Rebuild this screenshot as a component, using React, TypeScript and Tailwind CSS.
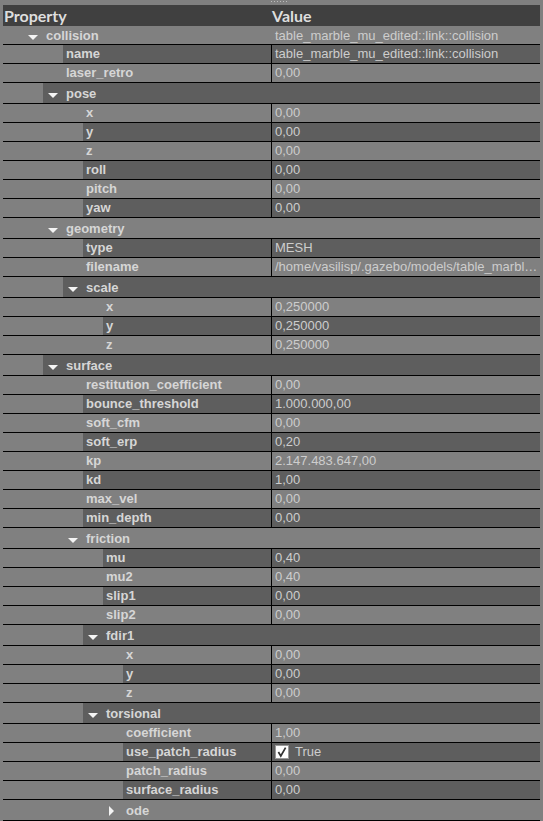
import React from 'react';

type Row = {
  label: string;
  depth: number;
  group?: 'open' | 'closed';
  value?: string;
  check?: boolean;
};

const rows: Row[] = [
  { label: 'collision', depth: 0, group: 'open', value: 'table_marble_mu_edited::link::collision' },
  { label: 'name', depth: 1, value: 'table_marble_mu_edited::link::collision' },
  { label: 'laser_retro', depth: 1, value: '0,00' },
  { label: 'pose', depth: 1, group: 'open' },
  { label: 'x', depth: 2, value: '0,00' },
  { label: 'y', depth: 2, value: '0,00' },
  { label: 'z', depth: 2, value: '0,00' },
  { label: 'roll', depth: 2, value: '0,00' },
  { label: 'pitch', depth: 2, value: '0,00' },
  { label: 'yaw', depth: 2, value: '0,00' },
  { label: 'geometry', depth: 1, group: 'open' },
  { label: 'type', depth: 2, value: 'MESH' },
  { label: 'filename', depth: 2, value: '/home/vasilisp/.gazebo/models/table_marbl…' },
  { label: 'scale', depth: 2, group: 'open' },
  { label: 'x', depth: 3, value: '0,250000' },
  { label: 'y', depth: 3, value: '0,250000' },
  { label: 'z', depth: 3, value: '0,250000' },
  { label: 'surface', depth: 1, group: 'open' },
  { label: 'restitution_coefficient', depth: 2, value: '0,00' },
  { label: 'bounce_threshold', depth: 2, value: '1.000.000,00' },
  { label: 'soft_cfm', depth: 2, value: '0,00' },
  { label: 'soft_erp', depth: 2, value: '0,20' },
  { label: 'kp', depth: 2, value: '2.147.483.647,00' },
  { label: 'kd', depth: 2, value: '1,00' },
  { label: 'max_vel', depth: 2, value: '0,00' },
  { label: 'min_depth', depth: 2, value: '0,00' },
  { label: 'friction', depth: 2, group: 'open' },
  { label: 'mu', depth: 3, value: '0,40' },
  { label: 'mu2', depth: 3, value: '0,40' },
  { label: 'slip1', depth: 3, value: '0,00' },
  { label: 'slip2', depth: 3, value: '0,00' },
  { label: 'fdir1', depth: 3, group: 'open' },
  { label: 'x', depth: 4, value: '0,00' },
  { label: 'y', depth: 4, value: '0,00' },
  { label: 'z', depth: 4, value: '0,00' },
  { label: 'torsional', depth: 3, group: 'open' },
  { label: 'coefficient', depth: 4, value: '1,00' },
  { label: 'use_patch_radius', depth: 4, check: true, value: 'True' },
  { label: 'patch_radius', depth: 4, value: '0,00' },
  { label: 'surface_radius', depth: 4, value: '0,00' },
  { label: 'ode', depth: 4, group: 'closed' },
];

const leafIndent: Record<number, string> = {
  1: 'w-[60px]',
  2: 'w-[80px]',
  3: 'w-[100px]',
  4: 'w-[120px]',
};

const groupIndent: Record<number, string> = {
  0: 'w-[20px]',
  1: 'w-[40px]',
  2: 'w-[60px]',
  3: 'w-[80px]',
  4: 'w-[100px]',
};

const font = "font-['Liberation_Sans',Arial,sans-serif]";

const Arrow = ({ open }: { open: boolean }) =>
  open ? (
    <svg width="10" height="5" viewBox="0 0 10 5" className="mt-[5px]">
      <polygon points="0,0 10,0 5,5" fill="#f4f4f4" />
    </svg>
  ) : (
    <svg width="5" height="10" viewBox="0 0 5 10" className="ml-px mt-[2px]">
      <polygon points="0,0 5,5 0,10" fill="#f4f4f4" />
    </svg>
  );

const TreeRow = ({ row, index }: { row: Row; index: number }) => {
  const dark = index % 2 === 1;
  const bg = dark ? 'bg-[#5e5e5e]' : '';

  if (row.group) {
    const height = index === 0 ? 'h-[19px]' : 'h-[21px]';
    return (
      <div className={`flex ${height} border-b border-black`}>
        <div className="flex w-[268px] shrink-0">
          <div className={`${groupIndent[row.depth]} shrink-0`} />
          <div className={`flex flex-1 items-center ${bg}`}>
            <span className="flex w-[23px] shrink-0 justify-start pl-[5px]">
              <Arrow open={row.group === 'open'} />
            </span>
            <span className="pt-px font-bold text-[13px] text-[#d6d6d6]">{row.label}</span>
          </div>
        </div>
        <div className={`flex flex-1 items-center pl-[4px] pt-px text-[13px] text-[#cdcdcd] ${bg}`}>
          {row.value}
        </div>
      </div>
    );
  }

  return (
    <div className="flex h-[19px] border-b border-black">
      <div className="flex w-[268px] shrink-0">
        <div className={`${leafIndent[row.depth]} shrink-0`} />
        <div className={`flex flex-1 items-center pl-[3px] font-bold text-[13px] text-[#d6d6d6] ${bg}`}>
          {row.label}
        </div>
      </div>
      <div className="w-px shrink-0 bg-black" />
      <div className={`flex flex-1 items-center overflow-hidden whitespace-nowrap pl-[3px] text-[13px] text-[#cdcdcd] ${bg}`}>
        {row.check && (
          <span className="mr-[6px] flex h-[14px] w-[14px] items-center justify-center border border-[#9a9a9a] bg-white">
            <svg width="12" height="12" viewBox="0 0 12 12">
              <path d="M2.4 6 L4.8 10 L9.6 1.6" fill="none" stroke="#333333" strokeWidth="1.7" />
            </svg>
          </span>
        )}
        {row.value}
      </div>
    </div>
  );
};

export default function App() {
  return (
    <div className={`h-[821px] w-[543px] overflow-hidden bg-[#808080] ${font}`}>
      <div className="flex h-[5px] pl-[270px]">
        <svg width="18" height="4" viewBox="0 0 18 4">
          {[0, 3, 6, 9, 12, 15].map((x) => (
            <rect key={x} x={x + 1} y="1" width="1" height="1" fill="#bdbdbd" />
          ))}
        </svg>
      </div>
      <div className="mx-[3px] flex h-[21px] items-center bg-[#404040] font-['Lato',sans-serif] text-[16px] font-bold text-[#dedede]">
        <span className="w-[269px] pl-[1px]">Property</span>
        <span>Value</span>
      </div>
      <div className="mx-[3px]">
        {rows.map((row, i) => (
          <TreeRow key={i} row={row} index={i} />
        ))}
      </div>
    </div>
  );
}
